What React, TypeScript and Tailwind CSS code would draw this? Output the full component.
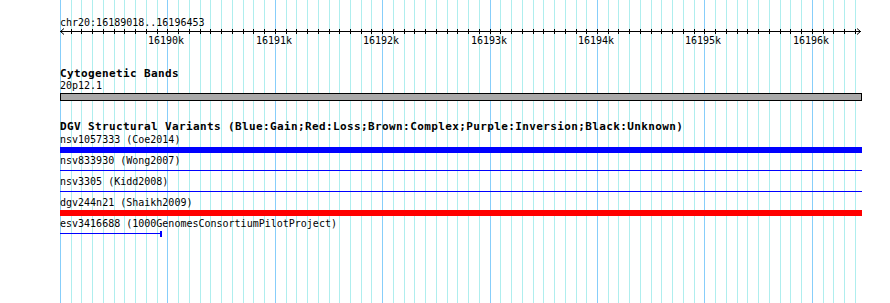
import React from "react";

const X0 = 60;
const STEP = 10.74;
const gridLines = Array.from({ length: 75 }, (_, i) => ({
  x: Math.round(X0 + i * STEP) + 0.5,
  major: i % 10 === 0,
}));
const ticks = Array.from({ length: 74 }, (_, i) => Math.round((i + 1) * STEP) + 0.5);
const majorLabels = Array.from({ length: 7 }, (_, k) => ({
  left: Math.round((k + 1) * 10 * STEP) - 19,
  text: `${16190 + k}k`,
}));

type Feat = { label: string; kind: "thick" | "thin" | "short"; color: string };
const feats: Feat[] = [
  { label: "nsv1057333 (Coe2014)", kind: "thick", color: "bg-[#0000ff]" },
  { label: "nsv833930 (Wong2007)", kind: "thin", color: "bg-[#0000ff]" },
  { label: "nsv3305 (Kidd2008)", kind: "thin", color: "bg-[#0000ff]" },
  { label: "dgv244n21 (Shaikh2009)", kind: "thick", color: "bg-[#ff0000]" },
  { label: "esv3416688 (1000GenomesConsortiumPilotProject)", kind: "short", color: "bg-[#0000ff]" },
];

export default function App() {
  return (
    <div className="relative w-[890px] h-[303px] overflow-hidden bg-white text-black font-['DejaVu_Sans_Mono',monospace]">
      <svg className="absolute inset-0" width={890} height={303} shapeRendering="crispEdges">
        {gridLines.map((l, i) => (
          <line key={i} x1={l.x} x2={l.x} y1={0} y2={303} stroke={l.major ? "#87cefa" : "#afeeee"} strokeWidth={1} />
        ))}
      </svg>
      <div className="relative flex flex-col pl-[60px] w-[862px]">
        <div className="h-[18px]" />
        <div className="h-[10px] leading-[10px] text-[10px] whitespace-nowrap">chr20:16189018..16196453</div>
        <svg width={802} height={8} shapeRendering="crispEdges" className="block">
          <line x1={0} x2={801} y1={3.5} y2={3.5} stroke="#000" />
          {ticks.map((t, i) => (
            <line key={i} x1={t} x2={t} y1={1} y2={6} stroke="#000" />
          ))}
          <polyline points="4,0.5 0.5,3.5 4,6.5" fill="none" stroke="#000" shapeRendering="auto" />
          <polyline points="797,0.5 800.5,3.5 797,6.5" fill="none" stroke="#000" shapeRendering="auto" />
        </svg>
        <div className="relative h-[10px] text-[10px] leading-[10px]">
          {majorLabels.map((m) => (
            <span key={m.text} className="absolute top-0 whitespace-nowrap" style={{ left: m.left }}>
              {m.text}
            </span>
          ))}
        </div>
        <div className="mt-[22px] h-[12px] leading-[12px] text-[11px] font-bold tracking-[0.38px] whitespace-nowrap">
          Cytogenetic Bands
        </div>
        <div className="mt-[1px] h-[10px] leading-[10px] text-[10px]">20p12.1</div>
        <div className="mt-[2px] h-[8px] w-[802px] border border-black bg-[#a9a9a9]" />
        <div className="mt-[20px] h-[12px] leading-[12px] text-[11px] font-bold tracking-[0.38px] whitespace-nowrap">
          DGV Structural Variants (Blue:Gain;Red:Loss;Brown:Complex;Purple:Inversion;Black:Unknown)
        </div>
        <div className="mt-[2px] flex flex-col">
          {feats.map((f) => (
            <div key={f.label} className="h-[21px] flex flex-col">
              <div className="h-[10px] leading-[10px] text-[10px] whitespace-nowrap">{f.label}</div>
              {f.kind === "thick" && <div className={`mt-[2px] h-[6px] w-[802px] ${f.color}`} />}
              {f.kind === "thin" && <div className={`mt-[4px] h-px w-[802px] ${f.color}`} />}
              {f.kind === "short" && (
                <div className="mt-[2px] h-[6px] flex items-start">
                  <div className={`mt-[2px] h-px w-[100px] ${f.color}`} />
                  <div className={`h-[6px] w-[2px] ${f.color}`} />
                </div>
              )}
            </div>
          ))}
        </div>
      </div>
    </div>
  );
}
